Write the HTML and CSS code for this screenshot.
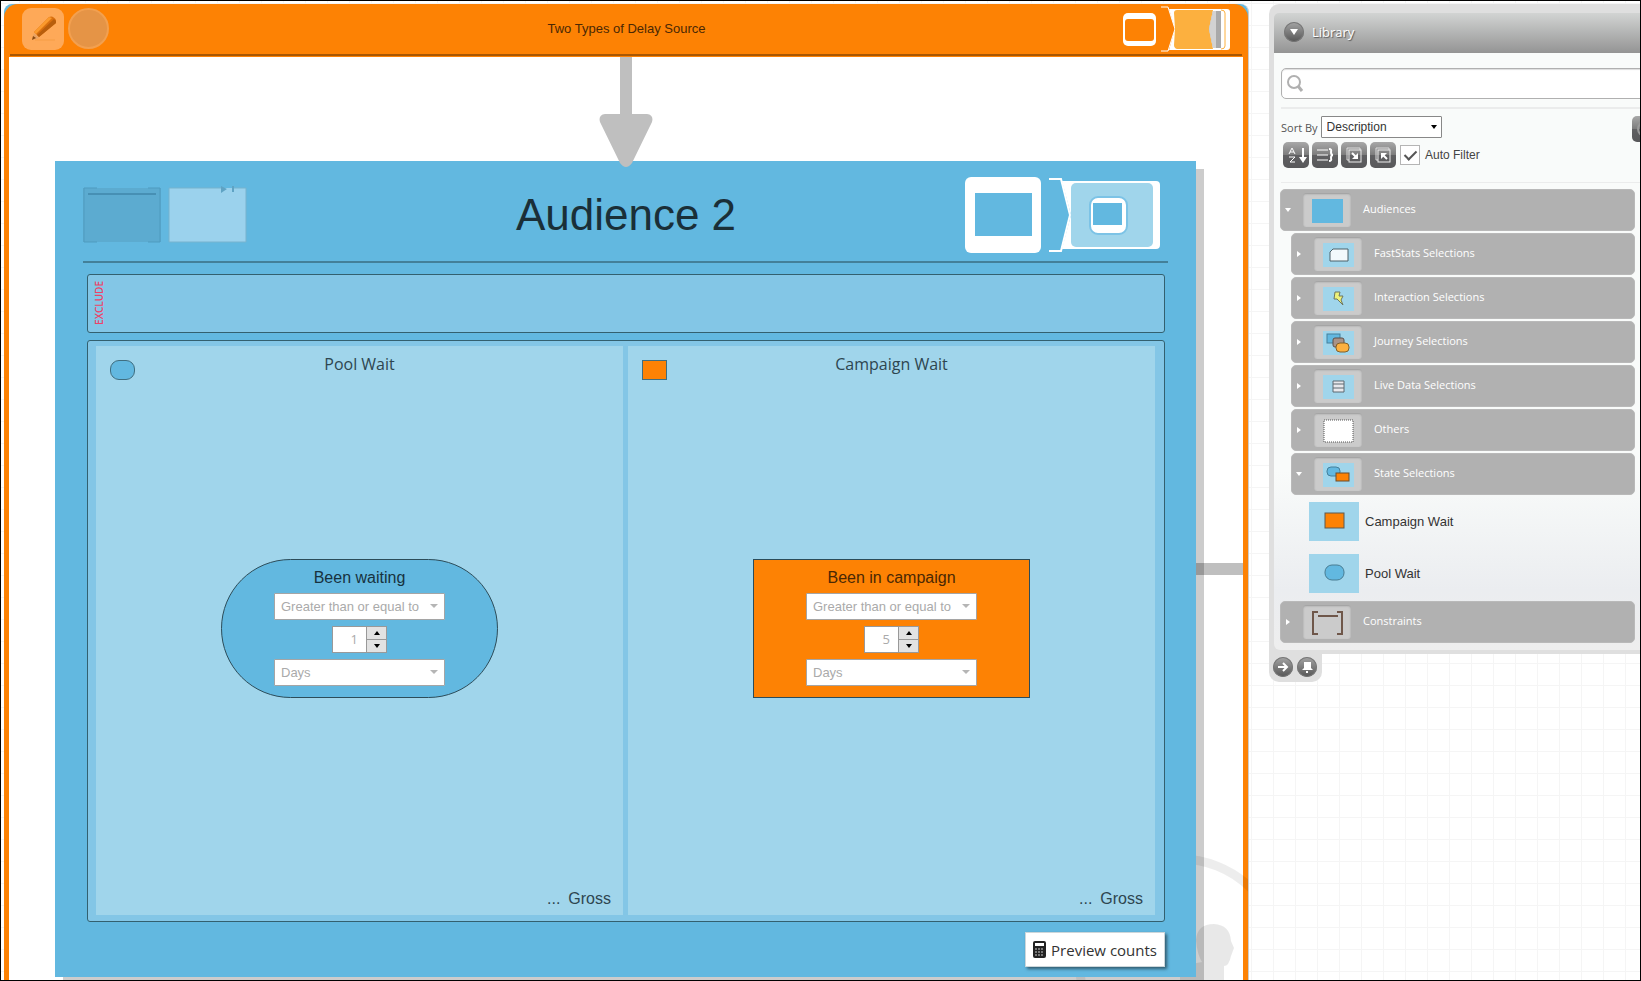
FILE: index.html
```html
<!DOCTYPE html>
<html lang="en">
<head>
  <meta charset="UTF-8" />
  <meta name="viewport" content="width=device-width, initial-scale=1.0"/>
  <title>Two Types of Delay Source</title>
  <link rel="stylesheet" href="styles.css">
</head>
<body>

<main class="campaign">
  <header class="campaign-header">
    <div class="campaign-tools">
      <button class="edit-btn" aria-label="Edit">
        <svg width="42" height="42" viewBox="0 0 42 42">
          <path d="M13 32h20" stroke="#f59d45" stroke-width="1"/>
          <path d="M10 32l2-7 5 5z" fill="#e8a263"/>
          <path d="M10 32l1-4 3 2z" fill="#8a4a10"/>
          <path d="M12 24L27 9q4-2 7 3v3L17 29z" fill="#d9700f"/>
          <path d="M12 24L27 9l3 1-16 16z" fill="#fb9a2c"/>
          <path d="M15 27L32 11l2 2v2L17 29z" fill="#b85e0c"/>
        </svg>
      </button>
      <button class="round-btn" aria-label="Status"></button>
    </div>
    <h1>Two Types of Delay Source</h1>
    <div class="campaign-views">
      <svg width="34" height="34" viewBox="0 0 34 34">
        <rect x="0" y="1" width="33" height="33" rx="5" fill="#fff"/>
        <rect x="2" y="7" width="29" height="22" rx="3" fill="#fd8204"/>
      </svg>
      <svg width="70" height="48" viewBox="0 0 70 48">
        <path d="M0 2h7l7 22-7 22H0" fill="none" stroke="#fff" stroke-width="1"/>
        <path d="M8 4h58q3 0 3 3v35q0 3-3 3H8l6-21z" fill="#fff"/>
        <path d="M16 5h36l-4 19 4 20H16q-3-1-3-4l1-16-1-16q0-3 3-3z" fill="#fcb03f"/>
        <path d="M52 6h8v37h-8l-4-19z" fill="#a9a9a9"/>
        <path d="M52 6h3v37h-3l-4-19z" fill="#d2d2d2"/>
        <path d="M60 5q4 0 4 3v33q0 3-4 3" fill="none" stroke="#fcb03f"/>
      </svg>
    </div>
  </header>

  <svg class="flow-arrow" width="54" height="110" viewBox="0 0 54 110">
    <path d="M21 0h12v57h15q7 1 5 8L33 106q-6 8-12 0L1 65q-2-7 5-8h15z" fill="#bfbfbf"/>
  </svg>

  <svg class="watermark" width="176" height="130" viewBox="0 0 176 130" fill="none">
    <circle cx="108" cy="110" r="101" stroke="#000" stroke-opacity=".07" stroke-width="9"/>
    <path d="M108 130v-14l22-4q-5-8-6-22 1-16 18-16 16 1 17 17l3 7-3 8q-2 10-7 10v14z" fill="#000" fill-opacity=".09"/>
  </svg>

  <div class="connector"></div>

  <section class="audience">
    <header class="audience-header">
      <div class="audience-shapes">
        <svg width="80" height="58" viewBox="0 0 80 58">
          <rect x="0" y="2" width="78" height="54" fill="#5cabd0"/>
          <path d="M14 2H1v54h13M65 2h12v54H65" fill="none" stroke="#4f9bbf" stroke-width="1"/>
          <path d="M5 8h68" stroke="#4790b4" stroke-width="2"/>
        </svg>
        <svg width="80" height="58" viewBox="0 0 80 58">
          <rect x="1" y="2" width="77" height="54" fill="#9bd2ed"/>
          <path d="M54 2H1v54h77V2H66" fill="none" stroke="#76b3ce" stroke-width="1"/>
          <path d="M53 0l6 3-6 4zM64 0h2v6h-2z" fill="#5fa3c4"/>
        </svg>
      </div>
      <h2>Audience 2</h2>
      <div class="audience-views">
        <svg width="76" height="76" viewBox="0 0 76 76">
          <rect width="76" height="76" rx="6" fill="#fff"/>
          <rect x="10" y="16" width="57" height="43" fill="#62b8e0"/>
        </svg>
        <svg width="112" height="76" viewBox="0 0 112 76">
          <path d="M0 2h12l9 36-9 36H0" fill="none" stroke="#fff" stroke-width="2"/>
          <path d="M13 4h94q4 0 4 4v60q0 4-4 4H13l9-34z" fill="#fff"/>
          <rect x="22" y="6" width="82" height="64" rx="5" fill="#a0d5eb"/>
          <rect x="41" y="20" width="37" height="37" rx="8" fill="#fff" stroke="#7cc3e6" stroke-width="2"/>
          <rect x="44" y="26" width="29" height="22" fill="#62b8e0"/>
        </svg>
      </div>
    </header>

    <div class="exclude"><span>EXCLUDE</span></div>

    <div class="pools">
      <section class="pool">
        <header class="pool-header">
          <i class="mini mini-pool"></i>
          <h3>Pool Wait</h3>
        </header>
        <form class="rule rule-pool">
          <h4>Been waiting</h4>
          <div class="dropdown">
            <select aria-label="Waiting comparison"><option>Greater than or equal to</option></select>
          </div>
          <div class="spinner">
            <input type="text" value="1" aria-label="Waiting amount">
            <div class="spin-btns">
              <button type="button" class="up" aria-label="More"></button>
              <button type="button" class="down" aria-label="Less"></button>
            </div>
          </div>
          <div class="dropdown">
            <select aria-label="Waiting unit"><option>Days</option></select>
          </div>
        </form>
        <footer class="pool-footer"><span>...</span><span>Gross</span></footer>
      </section>

      <section class="pool">
        <header class="pool-header">
          <i class="mini mini-campaign"></i>
          <h3>Campaign Wait</h3>
        </header>
        <form class="rule rule-campaign">
          <h4>Been in campaign</h4>
          <div class="dropdown">
            <select aria-label="Campaign comparison"><option>Greater than or equal to</option></select>
          </div>
          <div class="spinner">
            <input type="text" value="5" aria-label="Campaign amount">
            <div class="spin-btns">
              <button type="button" class="up" aria-label="More"></button>
              <button type="button" class="down" aria-label="Less"></button>
            </div>
          </div>
          <div class="dropdown">
            <select aria-label="Campaign unit"><option>Days</option></select>
          </div>
        </form>
        <footer class="pool-footer"><span>...</span><span>Gross</span></footer>
      </section>
    </div>

    <footer class="audience-footer">
      <button class="preview-btn">
        <svg width="13" height="18" viewBox="0 0 13 18">
          <rect x="0" y="0" width="13" height="17" rx="2" fill="#222"/>
          <rect x="2" y="2" width="9" height="3" fill="#fff"/>
          <path d="M2 8h9M2 11h9M2 14h9" stroke="#ccc" stroke-width="1" stroke-dasharray="2 1"/>
        </svg>
        Preview counts
      </button>
    </footer>
  </section>
</main>

<aside class="library">
  <div class="library-frame">
    <header class="library-header">
      <button class="round-icon" aria-label="Collapse library">
        <svg width="20" height="20" viewBox="0 0 20 20"><path d="M6 7h8l-4 6z" fill="#fff"/></svg>
      </button>
      <h2>Library</h2>
    </header>
    <div class="library-body">
      <div class="search">
        <svg width="17" height="17" viewBox="0 0 17 17" fill="none" stroke="#b0b0b0">
          <circle cx="7" cy="7" r="6" stroke-width="2"/>
          <path d="M11 11l4 5" stroke-width="3"/>
        </svg>
        <input type="text" aria-label="Search library">
      </div>
      <div class="tools">
        <div class="sort-row">
          <label for="sort">Sort By</label>
          <div class="dropdown sort">
            <select id="sort"><option>Description</option></select>
          </div>
          <button class="tool-btn more-btn" aria-label="Refresh">
            <svg width="26" height="26" viewBox="0 0 26 26" fill="none" stroke="#999" stroke-width="2"><circle cx="13" cy="13" r="7"/></svg>
          </button>
        </div>
        <div class="tool-row">
          <button class="tool-btn" aria-label="Sort ascending">
            <svg width="26" height="26" viewBox="0 0 26 26" fill="none" stroke="#fff">
              <path d="M6 12l3-6 3 6M7 10h4M6 15h6l-5 5h5" stroke-width="1"/>
              <path d="M20 6v12" stroke-width="2"/><path d="M16 15h8l-4 6z" fill="#fff" stroke="none"/>
            </svg>
          </button>
          <button class="tool-btn" aria-label="Group">
            <svg width="26" height="26" viewBox="0 0 26 26" fill="none" stroke="#fff">
              <path d="M5 8h11M5 13h11M5 18h11"/>
              <path d="M17 7q3 0 2 3 0 3 2 3-2 0-2 3 1 3-2 3" stroke-width="2"/>
            </svg>
          </button>
          <button class="tool-btn" aria-label="Collapse all">
            <svg width="26" height="26" viewBox="0 0 26 26" fill="none" stroke="#ddd">
              <path d="M8 18H6V6h13v2"/><rect x="8" y="8" width="12" height="12" stroke="#eee"/>
              <path d="M11 11l5 5" stroke="#fff" stroke-width="2"/><path d="M17 11v6h-6z" fill="#fff" stroke="none"/>
            </svg>
          </button>
          <button class="tool-btn" aria-label="Expand all">
            <svg width="26" height="26" viewBox="0 0 26 26" fill="none" stroke="#ddd">
              <path d="M8 18H6V6h13v2"/><rect x="8" y="8" width="12" height="12" stroke="#eee"/>
              <path d="M17 17l-5-5" stroke="#fff" stroke-width="2"/><path d="M11 17v-6h6z" fill="#fff" stroke="none"/>
            </svg>
          </button>
          <input type="checkbox" id="auto-filter" checked>
          <label for="auto-filter">Auto Filter</label>
        </div>
      </div>

      <ul class="tree">
        <li>
          <button class="node open">
            <span class="thumb"><svg width="31" height="24"><rect width="31" height="24" fill="#62b8e0"/></svg></span>
            Audiences
          </button>
          <ul class="branch">
            <li><button class="node">
              <span class="thumb"><svg width="31" height="24" viewBox="0 0 31 24">
                <rect width="31" height="24" fill="#a0d5eb"/>
                <path d="M10 6h15v12H7V9z" fill="#f2f9fc" stroke="#4c6068"/>
              </svg></span>
              FastStats Selections
            </button></li>
            <li><button class="node">
              <span class="thumb"><svg width="31" height="24" viewBox="0 0 31 24">
                <rect width="31" height="24" fill="#a0d5eb"/>
                <path d="M12 5h5l-1 4h4l-2 4 2 5-6-6h-3z" fill="#eef27a" stroke="#6d7660"/>
              </svg></span>
              Interaction Selections
            </button></li>
            <li><button class="node">
              <span class="thumb"><svg width="31" height="24" viewBox="0 0 31 24">
                <rect width="31" height="24" fill="#a0d5eb"/>
                <rect x="4" y="3" width="13" height="9" fill="#62b8e0" stroke="#45809c"/>
                <rect x="10" y="7" width="11" height="9" rx="2" fill="#a89388" stroke="#5c4f49"/>
                <rect x="13" y="12" width="13" height="9" rx="4" fill="#fcb03f" stroke="#80602c"/>
              </svg></span>
              Journey Selections
            </button></li>
            <li><button class="node">
              <span class="thumb"><svg width="31" height="24" viewBox="0 0 31 24">
                <rect width="31" height="24" fill="#a0d5eb"/>
                <path d="M10 6h11v11H10zM10 9h11M10 13h11" fill="#e8e8ec" stroke="#5d6970"/>
              </svg></span>
              Live Data Selections
            </button></li>
            <li><button class="node">
              <span class="thumb"><svg width="31" height="24" viewBox="0 0 31 24">
                <rect x="1" y="1" width="29" height="22" fill="#fff" stroke="#555" stroke-dasharray="1 1"/>
              </svg></span>
              Others
            </button></li>
            <li>
              <button class="node open">
                <span class="thumb"><svg width="31" height="24" viewBox="0 0 31 24">
                  <rect width="31" height="24" fill="#a0d5eb"/>
                  <rect x="4" y="4" width="13" height="9" rx="4" fill="#62b8e0" stroke="#45809c"/>
                  <rect x="13" y="10" width="13" height="8" fill="#fd8204" stroke="#6b4c2c"/>
                </svg></span>
                State Selections
              </button>
              <ul class="leaves">
                <li><a href="#"><svg width="50" height="39" viewBox="0 0 50 39">
                  <rect width="50" height="39" fill="#a0d5eb"/>
                  <rect x="16" y="11" width="19" height="15" fill="#fd8204" stroke="#5d5a50"/>
                </svg>Campaign Wait</a></li>
                <li><a href="#"><svg width="50" height="39" viewBox="0 0 50 39">
                  <rect width="50" height="39" fill="#a0d5eb"/>
                  <rect x="16" y="11" width="19" height="15" rx="7" fill="#62b8e0" stroke="#487c92"/>
                </svg>Pool Wait</a></li>
              </ul>
            </li>
          </ul>
        </li>
        <li>
          <button class="node">
            <span class="thumb"><svg width="31" height="24" viewBox="0 0 31 24" fill="none" stroke="#6f574a">
              <path d="M6 1H1v22h5M25 1h5v22h-5" stroke-width="2"/>
              <path d="M6 5h20" stroke-width="2"/>
            </svg></span>
            Constraints
          </button>
        </li>
      </ul>
    </div>
  </div>
  <div class="library-tab">
    <button class="round-icon" aria-label="Dock right">
      <svg width="20" height="20" viewBox="0 0 20 20"><path d="M5 10h9M10 6l4 4-4 4" fill="none" stroke="#fff" stroke-width="2"/></svg>
    </button>
    <button class="round-icon" aria-label="Pin">
      <svg width="20" height="20" viewBox="0 0 20 20"><path d="M7 5h7v6l2 2H5l2-2zM9 14h2v2H9z" fill="#fff"/></svg>
    </button>
  </div>
</aside>

</body>
</html>
```

FILE: styles.css
```css
* {
  box-sizing: border-box;
}
body {
  margin: 0;
  height: 100vh;
  border: 1px solid #000;
  padding: 3px 0 0 3px;
  display: flex;
  gap: 21px;
  overflow: hidden;
  font-family: "Liberation Sans", Arial, sans-serif;
  background-color: #fff;
  background-image: linear-gradient(#f5f5f5 1px, transparent 1px), linear-gradient(90deg, #f5f5f5 1px, transparent 1px);
  background-size: 22px 22px;
  background-position: 19px 3px;
}
h1, h2, h3, h4 {
  margin: 0;
  font-weight: normal;
}
ul {
  list-style: none;
  margin: 0;
  padding: 0;
}
button {
  border: 0;
  padding: 0;
  cursor: pointer;
}
svg {
  display: block;
  flex: none;
}

/* campaign */
.campaign {
  position: relative;
  flex: 1;
  min-width: 0;
  display: flex;
  flex-direction: column;
  padding: 0 5px;
  background:
    linear-gradient(#62b8e0, #62b8e0) top / 100% 20px no-repeat,
    linear-gradient(90deg, #fd8204 5px, #fff 5px, #fff calc(100% - 5px), #fd8204 calc(100% - 5px));
  border-radius: 8px 8px 0 0;
  box-shadow: 1px 0 #ccc;
}
.campaign-header {
  height: 53px;
  margin: 0 -5px;
  padding: 0 17px 4px 18px;
  display: grid;
  grid-template-columns: 1fr auto 1fr;
  align-items: center;
  background: linear-gradient(#a85703, #a85703) 6px 50px / calc(100% - 12px) 2px no-repeat #fd8204;
  border-radius: 14px 14px 0 0;
}
.campaign-header h1 {
  font-size: 13px;
  color: #4a2804;
}
.campaign-tools, .campaign-views {
  display: flex;
  align-items: center;
  gap: 4px;
}
.campaign-views {
  justify-content: flex-end;
}
.edit-btn {
  width: 42px;
  height: 42px;
  border-radius: 9px;
  background: #fea958;
}
.round-btn {
  width: 41px;
  height: 41px;
  border-radius: 50%;
  background: #e59446;
  border: 2px solid #f2a050;
}
.flow-arrow {
  position: relative;
  z-index: 2;
  align-self: center;
  margin-bottom: -6px;
}
.watermark {
  position: absolute;
  right: 0;
  bottom: 0;
}
.connector {
  position: absolute;
  right: 5px;
  top: 559px;
  width: 60px;
  height: 12px;
  background: #bfbfbf;
}

/* audience */
.audience {
  position: relative;
  flex: 1;
  display: flex;
  flex-direction: column;
  margin: 0 47px 3px 46px;
  padding: 0 28px;
  background: #62b8e0;
  box-shadow: 8px 8px 0 rgba(0, 0, 0, 0.2);
}
.audience-header {
  height: 102px;
  padding: 8px 7px 0 0;
  display: grid;
  grid-template-columns: 1fr auto 1fr;
  align-items: center;
  border-bottom: 2px solid #438099;
}
.audience-header h2 {
  margin-left: 8px;
  font-size: 44px;
  color: #1a2f38;
}
.audience-shapes, .audience-views {
  display: flex;
  gap: 8px;
}
.audience-shapes {
  gap: 5px;
}
.audience-views {
  justify-content: flex-end;
}
.exclude, .pools {
  margin: 0 3px 0 4px;
  border: 1px solid #33606f;
  border-radius: 3px;
  background: #83c6e6;
}
.exclude {
  height: 59px;
  margin-top: 11px;
  padding: 4px 5px 6px;
  display: flex;
  align-items: center;
}
.exclude span {
  writing-mode: vertical-rl;
  transform: rotate(180deg);
  font: 10px/12px "Open Sans", sans-serif;
  font-weight: 600;
  color: #ee4266;
}
.pools {
  flex: 1;
  margin-top: 7px;
  padding: 5px 9px 6px 8px;
  display: grid;
  grid-template-columns: 1fr 1fr;
  gap: 5px;
}
.pool {
  display: flex;
  flex-direction: column;
  align-items: center;
  background: #a0d5eb;
}
.pool-header {
  position: relative;
  align-self: stretch;
  height: 36px;
  padding-top: 7px;
}
.pool-header h3 {
  font: 16px/22px "Open Sans", sans-serif;
  text-align: center;
  color: #2e4650;
}
.mini {
  position: absolute;
  left: 14px;
  top: 14px;
  width: 25px;
  height: 20px;
  border: 1px solid #3f6e80;
}
.mini-pool {
  background: #62b8e0;
  border-radius: 9px;
}
.mini-campaign {
  background: #fd8204;
}
.rule {
  width: 277px;
  margin: auto;
  padding: 8px 0 11px;
  display: flex;
  flex-direction: column;
  align-items: center;
  gap: 6px;
  border: 1px solid #2c4c59;
}
.rule h4 {
  margin-bottom: -1px;
  font-size: 16px;
  line-height: 20px;
  color: #17323e;
}
.rule-pool {
  border-radius: 70px;
  background: #62b8e0;
}
.rule-campaign {
  background: #fd8204;
}
.rule-campaign h4 {
  color: #4a2804;
}
.dropdown {
  position: relative;
  width: 171px;
}
.dropdown select {
  display: block;
  width: 100%;
  height: 27px;
  padding: 0 6px;
  appearance: none;
  border: 1px solid #a5a5a5;
  border-radius: 1px;
  background: #fff;
  font: 13px "Liberation Sans", Arial, sans-serif;
  color: #aaa;
}
.dropdown::after {
  content: "";
  position: absolute;
  right: 7px;
  top: 11px;
  border: 4px solid transparent;
  border-top-color: #b5b5b5;
  border-bottom: 0;
}
.spinner {
  display: flex;
  width: 55px;
  height: 27px;
  border: 1px solid #999;
  background: #999;
}
.spinner input {
  width: 33px;
  padding: 0 8px 2px;
  border: 0;
  text-align: right;
  font: 13px "Open Sans", sans-serif;
  color: #aaa;
}
.spin-btns {
  flex: 1;
  margin-left: 1px;
  display: flex;
  flex-direction: column;
  gap: 1px;
}
.spin-btns button {
  flex: 1;
  display: flex;
  align-items: center;
  justify-content: center;
  background: #e2e2e2;
}
.spin-btns button::before {
  content: "";
  border: 3px solid transparent;
}
.spin-btns .up::before {
  border-bottom: 4px solid #000;
  border-top: 0;
}
.spin-btns .down::before {
  border-top: 4px solid #000;
  border-bottom: 0;
}
.pool-footer {
  align-self: stretch;
  height: 40px;
  padding: 14px 12px 0;
  display: flex;
  justify-content: flex-end;
  gap: 8px;
  font-size: 16px;
  line-height: 20px;
  color: #2e4650;
}
.audience-footer {
  padding: 10px 3px;
  display: flex;
  justify-content: flex-end;
}
.preview-btn {
  height: 35px;
  padding: 0 7px;
  display: flex;
  align-items: center;
  gap: 5px;
  border: 1px solid #ccd6da;
  background: #fff;
  box-shadow: 2px 2px 3px rgba(0, 0, 0, 0.5);
  font: 15px "Open Sans", sans-serif;
  color: #333;
}

/* library */
.library {
  flex: none;
  width: 371px;
}
.library-frame {
  padding: 9px 0 4px 5px;
  background: #dfdfdf;
  border-radius: 10px 0 0 0;
}
.library-header {
  height: 40px;
  padding: 0 0 2px 10px;
  display: flex;
  align-items: center;
  gap: 8px;
  background: linear-gradient(#d2d4d3, #949494);
  border-radius: 5px 0 0 0;
}
.library-header h2 {
  font: 13px "Open Sans", sans-serif;
  color: #fff;
  text-shadow: 1px 1px 1px #555;
}
.round-icon {
  width: 20px;
  height: 20px;
  border-radius: 50%;
  background: linear-gradient(#a5a5a5, #555);
  box-shadow: inset 0 0 0 1px #777;
}
.library-body {
  padding: 15px 5px 7px 6px;
  background: linear-gradient(#f9fbfa 70%, #ebedf0 90%, #eee);
  border-radius: 0 0 0 6px;
  overflow: hidden;
}
.search {
  height: 31px;
  margin: 0 -12px 8px 1px;
  padding-left: 5px;
  display: flex;
  align-items: center;
  gap: 6px;
  background: #fff;
  border: 1px solid #b0b0b0;
  border-radius: 5px;
  box-shadow: inset 0 1px 1px #ddd;
}
.search input {
  flex: 1;
  border: 0;
  outline: 0;
  background: none;
  font-size: 13px;
}
.tools {
  margin: 0 -5px 6px 1px;
  padding: 7px 0 14px;
  border: solid #ebecec;
  border-width: 2px 0 1px;
}
.sort-row, .tool-row {
  display: flex;
  align-items: center;
}
.sort-row {
  gap: 3px;
  height: 22px;
  margin-bottom: 4px;
}
.sort-row label {
  font: 11px "Open Sans", sans-serif;
  color: #555;
}
.sort {
  width: 121px;
}
.sort select {
  height: 22px;
  padding: 0 5px;
  border-color: #888;
  font-size: 12px;
  color: #333;
}
.sort::after {
  right: 5px;
  top: 9px;
  border-width: 3px;
  border-top: 4px solid #000;
}
.tool-row {
  gap: 3px;
  padding-left: 2px;
}
.tool-btn {
  width: 26px;
  height: 26px;
  border-radius: 5px;
  background: linear-gradient(#a8a8a8, #7c7c7c 50%, #606062 51%, #58585a);
}
.more-btn {
  align-self: flex-start;
  flex: none;
  margin: 0 -18px 0 auto;
}
.tool-row input {
  appearance: none;
  width: 20px;
  height: 20px;
  margin: 0 2px 0 1px;
  border: 1px solid #b5b5b5;
  background: #fff;
}
.tool-row input:checked::before {
  content: "";
  display: block;
  width: 5px;
  height: 10px;
  margin: 2px 6px;
  border: solid #555;
  border-width: 0 2px 2px 0;
  transform: rotate(45deg);
}
.tool-row label {
  font-size: 12px;
  color: #444;
}

/* library tree */
.node {
  width: 100%;
  height: 42px;
  margin-bottom: 2px;
  padding: 0 0 4px 4px;
  display: flex;
  align-items: center;
  background: #b1b1b1;
  border: 1px solid #b9b9b9;
  border-radius: 5px;
  font: 11px "Open Sans", sans-serif;
  color: #fff;
}
.node::before {
  content: "";
  margin: 4px 13px 0 1px;
  border: solid transparent;
  border-width: 3px 0 3px 4px;
  border-left-color: #fff;
}
.node.open::before {
  margin: 4px 12px 0 0;
  border-width: 4px 3px 0;
  border-color: #fff transparent;
}
.thumb {
  width: 48px;
  height: 34px;
  margin: 4px 12px 0 0;
  padding-top: 2px;
  display: flex;
  align-items: center;
  justify-content: center;
  background: #cbcbcb;
  border-radius: 3px;
  box-shadow: inset 0 1px 2px #999;
}
.branch {
  margin-left: 11px;
}
.leaves {
  padding: 5px 0 8px 18px;
  display: grid;
  gap: 13px;
}
.leaves a {
  display: flex;
  align-items: center;
  gap: 6px;
  font-size: 13px;
  color: #333;
  text-decoration: none;
}
.tree > li > .node:last-child {
  margin-bottom: 0;
}
.library-tab {
  width: 53px;
  height: 28px;
  padding: 3px 4px;
  display: flex;
  gap: 4px;
  background: #dfdfdf;
  border-radius: 0 0 10px 10px;
}
```
